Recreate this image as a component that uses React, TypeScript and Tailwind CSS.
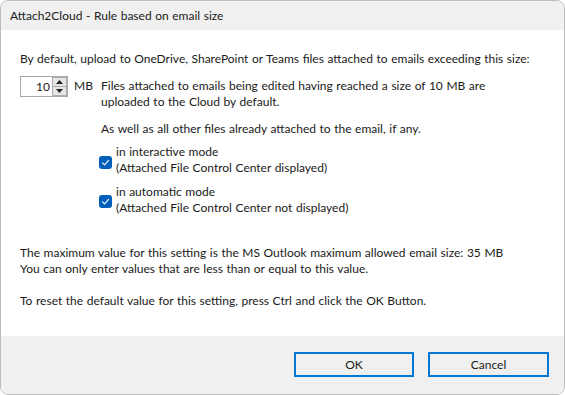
import React from "react";

function Check() {
  return (
    <div className="w-[13px] h-[13px] rounded-[3px] bg-[#005fb8] flex items-center justify-center shrink-0">
      <svg width="9" height="9" viewBox="0 0 9 9">
        <path d="M1.5 4.8 L3.6 6.8 L7.6 2.3" fill="none" stroke="white" strokeWidth="1.1" strokeLinecap="round" strokeLinejoin="round" />
      </svg>
    </div>
  );
}

function Spin() {
  return (
    <div className="w-[48px] h-[21px] border border-[#a9a9a9] bg-white flex">
      <div className="flex-1 text-right pr-[2px] leading-[19px]">10</div>
      <div className="w-[15px] flex flex-col">
        <div className="h-[10px] border border-[#adadad] bg-[#e5e5e5] flex items-center justify-center">
          <svg width="7" height="4" viewBox="0 0 7 4"><path d="M0 4 L3.5 0 L7 4 Z" fill="#222" /></svg>
        </div>
        <div className="h-[9px] border border-t-0 border-[#adadad] bg-[#e5e5e5] flex items-center justify-center">
          <svg width="7" height="4" viewBox="0 0 7 4"><path d="M0 0 L3.5 4 L7 0 Z" fill="#222" /></svg>
        </div>
      </div>
    </div>
  );
}

export default function App() {
  return (
    <div
      className="w-[565px] h-[395px] flex flex-col border border-[#bdbdbd] rounded-[8px] overflow-hidden bg-white text-[12px] leading-[16px] text-[#1a1a1a] [word-spacing:0.5px]"
      style={{ fontFamily: "Lato, 'Noto Sans', sans-serif" }}
    >
      <div className="h-[29px] bg-[#f0f0f0] pl-[9px] flex items-center">Attach2Cloud - Rule based on email size</div>
      <div className="flex-1 pl-[19px] pt-[21px]">
        <div>By default, upload to OneDrive, SharePoint or Teams files attached to emails exceeding this size:</div>
        <div className="flex mt-[9px]">
          <Spin />
          <div className="ml-[6px] pt-[2px] w-[26px]">MB</div>
          <div className="ml-[1px] pt-[2px] flex flex-col">
            <div>Files attached to emails being edited having reached a size of 10 MB are</div>
            <div>uploaded to the Cloud by default.</div>
            <div className="mt-[11px]">As well as all other files already attached to the email, if any.</div>
            <div className="flex mt-[7px] -ml-[2px]">
              <div className="mt-[12px]"><Check /></div>
              <div className="ml-[4px]">
                <div>in interactive mode</div>
                <div>(Attached File Control Center displayed)</div>
              </div>
            </div>
            <div className="flex mt-[8px] -ml-[2px]">
              <div className="mt-[11px]"><Check /></div>
              <div className="ml-[4px]">
                <div>in automatic mode</div>
                <div>(Attached File Control Center not displayed)</div>
              </div>
            </div>
          </div>
        </div>
        <div className="mt-[29px]">The maximum value for this setting is the MS Outlook maximum allowed email size: 35 MB</div>
        <div>You can only enter values that are less than or equal to this value.</div>
        <div className="mt-[16px]">To reset the default value for this setting, press Ctrl and click the OK Button.</div>
      </div>
      <div className="h-[58px] bg-[#f0f0f0] flex justify-end items-start pt-[16px] pr-[15px] gap-[14px]">
        <button className="w-[120px] h-[25px] border-2 border-[#0078d4] bg-[#f0f0f0] text-[12px]">OK</button>
        <button className="w-[121px] h-[25px] border-2 border-[#0078d4] bg-[#f0f0f0] text-[12px]">Cancel</button>
      </div>
    </div>
  );
}
